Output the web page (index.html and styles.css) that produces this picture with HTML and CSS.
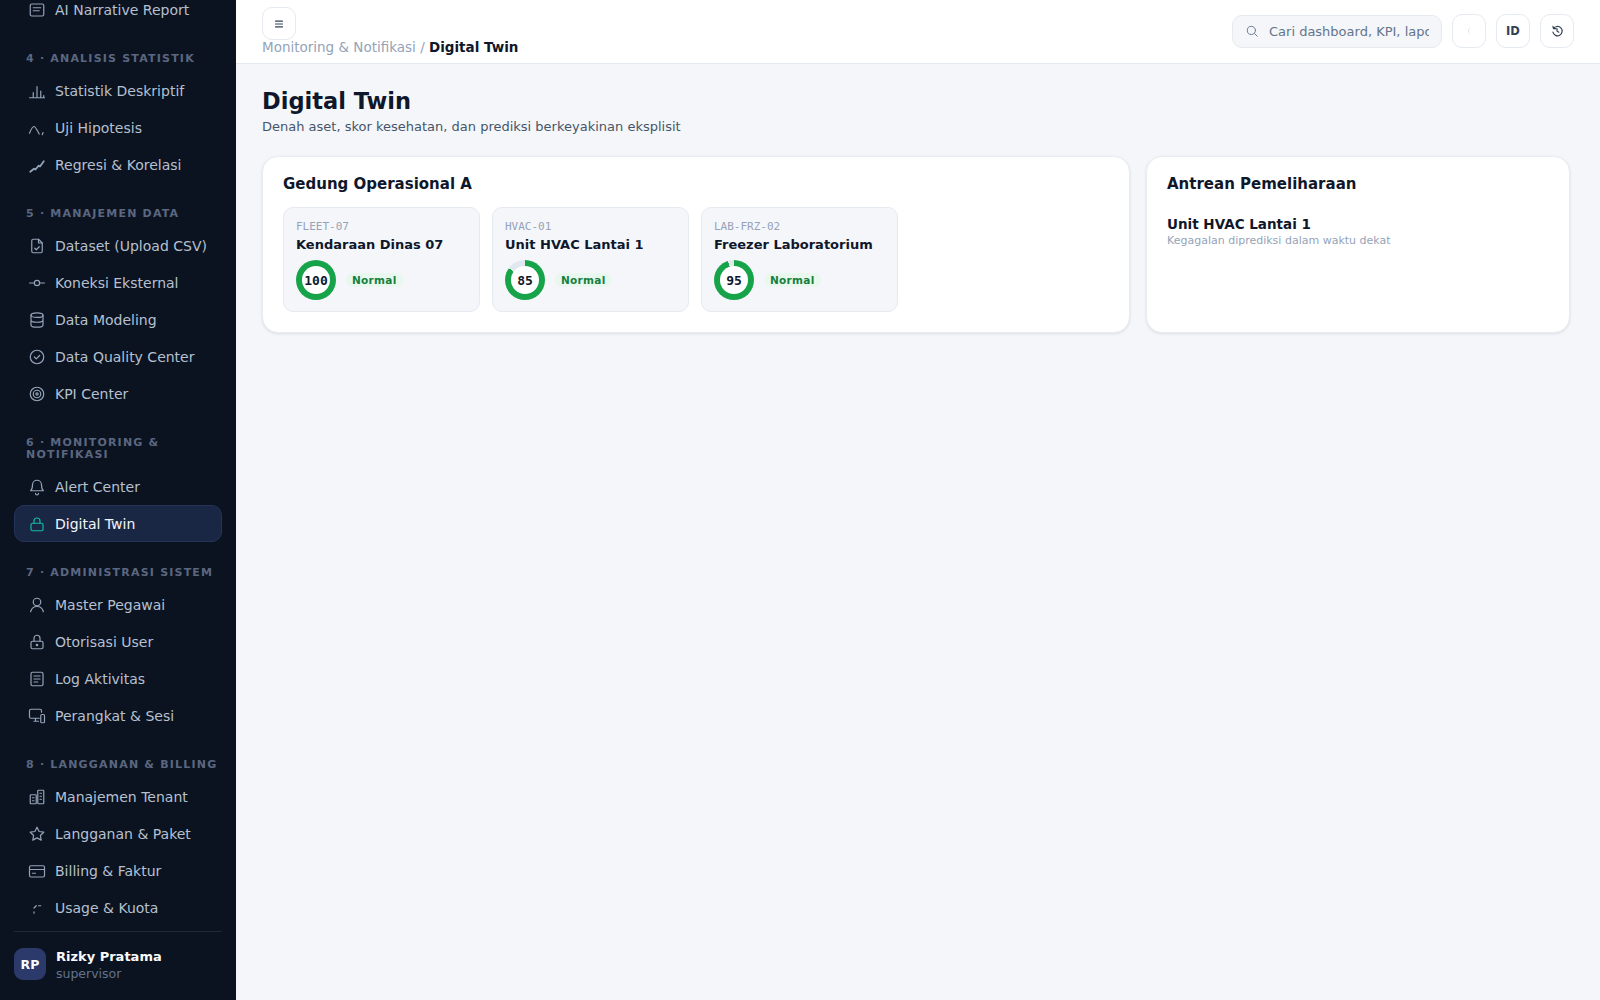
FILE: index.html
```html
<!DOCTYPE html>
<html lang="en">

<head>
    <meta charset="UTF-8">
    <meta name="viewport" content="width=device-width, initial-scale=1.0">
    <title>Digital Twin</title>
    <link rel="stylesheet" href="styles.css">
</head>

<body>
    <aside class="sidebar">
        <nav class="nav">
            <div class="nav-inner">
                <a class="nav-item"><svg class="ico" viewBox="0 0 24 24"><rect x="3" y="4" width="18" height="16" rx="2"/><path d="M7 9h10M7 13h8"/></svg>AI Narrative Report</a>

                <div class="nav-label">4 · Analisis Statistik</div>
                <a class="nav-item"><svg class="ico" viewBox="0 0 24 24"><path d="M2 21h20M7 21v-7M12 21V6M17 21v-9M21 21v-3"/></svg>Statistik Deskriptif</a>
                <a class="nav-item"><svg class="ico" viewBox="0 0 24 24"><path d="M2 19c2-5 4-9 6-9s4 5 7 10"/><path d="M20 18l-1 3"/></svg>Uji Hipotesis</a>
                <a class="nav-item"><svg class="ico ico-bold" viewBox="0 0 24 24"><path d="M3 21l5-4 2 1 4-5 2 1 5-7"/></svg>Regresi &amp; Korelasi</a>

                <div class="nav-label">5 · Manajemen Data</div>
                <a class="nav-item"><svg class="ico" viewBox="0 0 24 24"><path d="M5 5a2 2 0 0 1 2-2h7l5 5v11a2 2 0 0 1-2 2H7a2 2 0 0 1-2-2z"/><path d="M14 3v5h5M9 15l2 2 4-4"/></svg>Dataset (Upload CSV)</a>
                <a class="nav-item"><svg class="ico" viewBox="0 0 24 24"><circle cx="12" cy="12" r="3.5"/><path d="M2 12h6M16 12h6"/></svg>Koneksi Eksternal</a>
                <a class="nav-item"><svg class="ico" viewBox="0 0 24 24"><ellipse cx="12" cy="5.5" rx="8" ry="3"/><path d="M4 5.5v13c0 1.700 3.600 3 8 3s8-1.300 8-3v-13M4 12c0 1.700 3.600 3 8 3s8-1.300 8-3"/></svg>Data Modeling</a>
                <a class="nav-item"><svg class="ico" viewBox="0 0 24 24"><circle cx="12" cy="12" r="9"/><path d="M8.500 12l2.500 2.500 4.500-4.500"/></svg>Data Quality Center</a>
                <a class="nav-item"><svg class="ico" viewBox="0 0 24 24"><circle cx="12" cy="12" r="9"/><circle cx="12" cy="12" r="5"/><circle cx="12" cy="12" r="1.500"/></svg>KPI Center</a>

                <div class="nav-label">6 · Monitoring &amp; Notifikasi</div>
                <a class="nav-item"><svg class="ico" viewBox="0 0 24 24"><path d="M6 9a6 6 0 0 1 12 0c0 6 2.500 8 2.500 8h-17S6 15 6 9z"/><path d="M10 20.500a2 2 0 0 0 4 0"/></svg>Alert Center</a>
                <a class="nav-item active"><svg class="ico" viewBox="0 0 24 24"><rect x="4" y="11" width="16" height="10" rx="2"/><path d="M8 11V8a4 4 0 0 1 8 0v3"/></svg>Digital Twin</a>

                <div class="nav-label">7 · Administrasi Sistem</div>
                <a class="nav-item"><svg class="ico" viewBox="0 0 24 24"><circle cx="12" cy="8" r="5"/><path d="M3.500 21c1-4.500 4.500-7 8.500-7s7.500 2.500 8.500 7"/></svg>Master Pegawai</a>
                <a class="nav-item"><svg class="ico" viewBox="0 0 24 24"><rect x="4" y="11" width="16" height="10" rx="2"/><path d="M8 11V7a4 4 0 0 1 8 0v4"/><circle cx="12" cy="16" r="1"/></svg>Otorisasi User</a>
                <a class="nav-item"><svg class="ico" viewBox="0 0 24 24"><rect x="4" y="3" width="16" height="18" rx="2"/><path d="M8 8h8M8 12h8M8 16h5"/></svg>Log Aktivitas</a>
                <a class="nav-item"><svg class="ico" viewBox="0 0 24 24"><path d="M15 15H4a2 2 0 0 1-2-2V5a2 2 0 0 1 2-2h12a2 2 0 0 1 2 2v2M8 19h6M10 15v4"/><rect x="17" y="10" width="5" height="11" rx="1.500"/></svg>Perangkat &amp; Sesi</a>

                <div class="nav-label">8 · Langganan &amp; Billing</div>
                <a class="nav-item"><svg class="ico" viewBox="0 0 24 24"><rect x="3" y="9" width="8" height="12" rx="1"/><rect x="13" y="3" width="8" height="18" rx="1"/><path d="M6 13h2M6 17h2M16 7h2M16 11h2M16 15h2"/></svg>Manajemen Tenant</a>
                <a class="nav-item"><svg class="ico" viewBox="0 0 24 24"><path d="M12 3l2.800 5.700 6.200.9-4.500 4.400 1.100 6.200-5.600-3-5.600 3 1.100-6.200L3 9.600l6.200-.9z"/></svg>Langganan &amp; Paket</a>
                <a class="nav-item"><svg class="ico" viewBox="0 0 24 24"><rect x="2" y="5" width="20" height="15" rx="2"/><path d="M2 10h20M6 15h4"/></svg>Billing &amp; Faktur</a>
                <a class="nav-item"><svg class="ico" viewBox="0 0 24 24"><path d="M8 19v-2M8 12l3-3M14 9h3"/></svg>Usage &amp; Kuota</a>
            </div>
        </nav>
        <div class="user">
            <div class="avatar">RP</div>
            <div>
                <div class="user-name">Rizky Pratama</div>
                <div class="user-role">supervisor</div>
            </div>
        </div>
    </aside>

    <div class="content">
        <header class="topbar">
            <div class="topbar-left">
                <button class="icon-btn menu-btn"><svg class="ico-sm" viewBox="0 0 24 24"><path d="M6 7h12M6 12h12M6 17h12"/></svg></button>
                <div class="crumbs">Monitoring &amp; Notifikasi / <b>Digital Twin</b></div>
            </div>
            <div class="topbar-right">
                <div class="search">
                    <svg class="ico-sm search-ico" viewBox="0 0 24 24"><circle cx="11" cy="11" r="7"/><path d="M16.500 16.500L21 21"/></svg>
                    <span class="search-text">Cari dashboard, KPI, laporan...</span>
                </div>
                <button class="icon-btn"><svg class="ico-sm moon" viewBox="0 0 24 24"><path d="M15 6a7 7 0 0 0 0 12 6.500 6.500 0 0 1 0-12z"/></svg></button>
                <button class="icon-btn lang">ID</button>
                <button class="icon-btn"><svg class="ico-sm" viewBox="0 0 24 24"><path d="M6 8a8 8 0 1 1-1 6M5 4l1 4 4 0M12 8v4l3 2"/></svg></button>
            </div>
        </header>

        <main class="main">
            <h1>Digital Twin</h1>
            <p class="subtitle">Denah aset, skor kesehatan, dan prediksi berkeyakinan eksplisit</p>

            <div class="grid">
                <section class="card">
                    <h2>Gedung Operasional A</h2>
                    <div class="assets">
                        <div class="asset">
                            <div class="asset-code">FLEET-07</div>
                            <div class="asset-name">Kendaraan Dinas 07</div>
                            <div class="asset-status">
                                <div class="ring" style="--score: 100"><span>100</span></div>
                                <span class="badge">Normal</span>
                            </div>
                        </div>
                        <div class="asset">
                            <div class="asset-code">HVAC-01</div>
                            <div class="asset-name">Unit HVAC Lantai 1</div>
                            <div class="asset-status">
                                <div class="ring" style="--score: 85"><span>85</span></div>
                                <span class="badge">Normal</span>
                            </div>
                        </div>
                        <div class="asset">
                            <div class="asset-code">LAB-FRZ-02</div>
                            <div class="asset-name">Freezer Laboratorium</div>
                            <div class="asset-status">
                                <div class="ring" style="--score: 95"><span>95</span></div>
                                <span class="badge">Normal</span>
                            </div>
                        </div>
                    </div>
                </section>

                <section class="card">
                    <h2>Antrean Pemeliharaan</h2>
                    <div class="queue-name">Unit HVAC Lantai 1</div>
                    <div class="queue-note">Kegagalan diprediksi dalam waktu dekat</div>
                </section>
            </div>
        </main>
    </div>
</body>

</html>
```

FILE: styles.css
```css
* {
    margin: 0;
    padding: 0;
    box-sizing: border-box;
}

body {
    width: 100vw;
    height: 100vh;
    overflow: hidden;
    display: flex;
    background: #f4f6fa;
    color: #0f172a;
    font-family: "DejaVu Sans", sans-serif;
}

/* sidebar */
.sidebar {
    width: 236px;
    height: 100%;
    flex-shrink: 0;
    display: flex;
    flex-direction: column;
    background: #0b1320;
}

.nav {
    flex: 1;
    min-height: 0;
    overflow: hidden;
    padding: 0 14px;
}

/* the list is scrolled, first row is cut by the window edge */
.nav-inner {
    margin-top: -9px;
}

.nav-item {
    height: 37px;
    display: flex;
    align-items: center;
    gap: 9px;
    padding: 0 13px;
    border: 1px solid transparent;
    border-radius: 10px;
    font-size: 14px;
    color: #b6c0d0;
}

.nav-item.active {
    background: #1a2744;
    border-color: #243357;
    color: #f1f5f9;
}

.nav-item.active .ico {
    stroke: #14b8a6;
}

.nav-label {
    padding: 25px 0 7px 12px;
    font-size: 11px;
    line-height: 12px;
    font-weight: 700;
    letter-spacing: 1.2px;
    text-transform: uppercase;
    color: #5b6780;
}

.ico {
    width: 18px;
    height: 18px;
    flex-shrink: 0;
    fill: none;
    stroke: #94a3b8;
    stroke-width: 1.6;
    stroke-linecap: round;
    stroke-linejoin: round;
}

.ico-bold {
    stroke-width: 2.4;
}

.user {
    height: 69px;
    flex-shrink: 0;
    margin: 0 14px;
    padding-top: 16px;
    display: flex;
    gap: 10px;
    border-top: 1px solid #1e293b;
}

.avatar {
    width: 32px;
    height: 32px;
    display: flex;
    align-items: center;
    justify-content: center;
    border-radius: 9px;
    background: #2b3a6b;
    color: #f8fafc;
    font-size: 12.500px;
    font-weight: 700;
}

.user-name {
    font-size: 13px;
    line-height: 17px;
    font-weight: 700;
    color: #f8fafc;
}

.user-role {
    font-size: 12.500px;
    line-height: 17px;
    color: #64748b;
}

/* topbar */
.content {
    flex: 1;
    min-width: 0;
    display: flex;
    flex-direction: column;
}

.topbar {
    height: 64px;
    flex-shrink: 0;
    display: flex;
    justify-content: space-between;
    align-items: center;
    padding: 0 26px;
    background: #fff;
    border-bottom: 1px solid #e5e9f0;
}

.topbar-left {
    align-self: flex-start;
    padding-top: 7px;
}

.topbar-right {
    display: flex;
    align-items: center;
    gap: 10px;
    margin-top: -1px;
}

.icon-btn {
    width: 34px;
    height: 34px;
    display: flex;
    align-items: center;
    justify-content: center;
    border: 1px solid #e5e9f0;
    border-radius: 10px;
    background: #fff;
    color: #334155;
    font-family: inherit;
}

.menu-btn {
    height: 33px;
}

.lang {
    font-size: 11.500px;
    font-weight: 700;
}

.ico-sm {
    width: 14px;
    height: 14px;
    fill: none;
    stroke: #334155;
    stroke-width: 2;
    stroke-linecap: round;
    stroke-linejoin: round;
}

.moon {
    fill: #b6bfcc;
    stroke: none;
}

.crumbs {
    font-size: 13.500px;
    line-height: 14px;
    color: #94a3b8;
}

.crumbs b {
    color: #0f172a;
}

.search {
    width: 210px;
    height: 33px;
    display: flex;
    align-items: center;
    gap: 10px;
    padding: 0 12px;
    overflow: hidden;
    border: 1px solid #e5e9f0;
    border-radius: 10px;
    background: #f4f6fa;
}

.search-ico {
    flex-shrink: 0;
    stroke: #64748b;
    stroke-width: 1.6;
}

.search-text {
    overflow: hidden;
    white-space: nowrap;
    font-size: 13px;
    color: #64748b;
}

/* page */
.main {
    flex: 1;
    padding: 25px 30px 0 26px;
}

h1 {
    font-size: 22.500px;
    line-height: 24px;
    font-weight: 700;
}

.subtitle {
    margin-top: 4px;
    font-size: 13px;
    line-height: 20px;
    color: #475569;
}

.grid {
    display: grid;
    grid-template-columns: minmax(0, 1fr) 424px;
    gap: 16px;
    margin-top: 19px;
}

.card {
    height: 177px;
    padding: 19px 20px;
    background: #fff;
    border: 1px solid #e8ecf2;
    border-radius: 16px;
    box-shadow: 0 1px 3px rgba(15, 23, 42, 0.1);
}

h2 {
    font-size: 15px;
    line-height: 17px;
    font-weight: 700;
}

.assets {
    display: flex;
    gap: 12px;
    margin-top: 14px;
}

.asset {
    width: 197px;
    height: 105px;
    padding: 12px;
    background: #f4f6fa;
    border: 1px solid #e5e9f0;
    border-radius: 10px;
}

.asset-code {
    font-family: "DejaVu Sans Mono", monospace;
    font-size: 11px;
    line-height: 14px;
    color: #94a3b8;
}

.asset-name {
    margin-top: 2px;
    font-size: 13px;
    line-height: 18px;
    font-weight: 700;
}

.asset-status {
    display: flex;
    align-items: center;
    gap: 10px;
    margin-top: 6px;
}

.ring {
    width: 40px;
    height: 40px;
    display: flex;
    align-items: center;
    justify-content: center;
    border-radius: 50%;
    background: conic-gradient(#16a34a calc(var(--score) * 1%), #e2e8f0 0);
}

.ring span {
    width: 28px;
    height: 28px;
    display: flex;
    align-items: center;
    justify-content: center;
    border-radius: 50%;
    background: #fff;
    font-family: "DejaVu Sans Mono", monospace;
    font-size: 13px;
    font-weight: 700;
}

.badge {
    padding: 0 6px;
    border-radius: 7px;
    background: #e9f7ee;
    color: #15803d;
    font-size: 10.500px;
    line-height: 14px;
    font-weight: 700;
    letter-spacing: 0.3px;
}

.queue-name {
    margin-top: 23px;
    font-size: 13.500px;
    line-height: 17px;
    font-weight: 700;
}

.queue-note {
    font-size: 11px;
    line-height: 15px;
    color: #94a3b8;
}
```
